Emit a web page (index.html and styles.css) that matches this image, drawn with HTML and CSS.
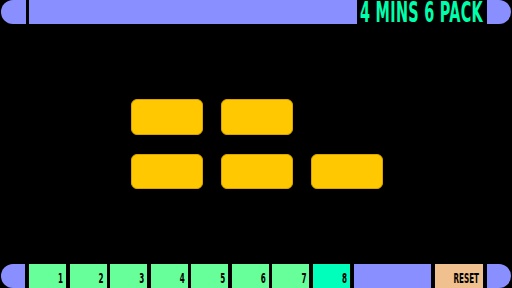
FILE: index.html
```html
<!DOCTYPE html>
<html>
<head>
<meta charset="utf-8">
<link rel="stylesheet" href="styles.css">
</head>
<body>
<div class="screen">
  <header class="topbar">
    <div class="cap cap-left"></div>
    <div class="bar"></div>
    <div class="title"><span class="title-text">4 MINS 6 PACK</span></div>
    <div class="cap cap-right"></div>
  </header>
  <main class="stage">
    <div class="pack">
      <div class="can"></div>
      <div class="can"></div>
      <div class="can empty"></div>
      <div class="can"></div>
      <div class="can"></div>
      <div class="can"></div>
    </div>
  </main>
  <footer class="bottombar">
    <div class="cap cap-left"></div>
    <div class="buttons">
      <div class="btn"><span class="label">1</span></div>
      <div class="btn"><span class="label">2</span></div>
      <div class="btn"><span class="label">3</span></div>
      <div class="btn"><span class="label">4</span></div>
      <div class="btn"><span class="label">5</span></div>
      <div class="btn"><span class="label">6</span></div>
      <div class="btn"><span class="label">7</span></div>
      <div class="btn active"><span class="label">8</span></div>
    </div>
    <div class="filler"></div>
    <div class="btn reset"><span class="label">RESET</span></div>
    <div class="cap cap-right"></div>
  </footer>
</div>
</body>
</html>
```

FILE: styles.css
```css
html, body {
  margin: 0;
  padding: 0;
  background: #000;
}
.screen {
  width: 512px;
  height: 288px;
  display: flex;
  flex-direction: column;
  background: #000;
  font-family: "DejaVu Sans Condensed", "DejaVu Sans", sans-serif;
}
.topbar, .bottombar {
  height: 24px;
  display: flex;
  align-items: stretch;
  padding: 0 1px 0 1px;
}
.cap {
  width: 25px;
  background: #8a8fff;
  flex: none;
}
.cap-left {
  border-radius: 12px 0 0 12px;
}
.cap-right {
  width: 24px;
  border-radius: 0 12px 12px 0;
}
.topbar .bar {
  flex: 1;
  background: #8a8fff;
  margin-left: 3px;
}
.title {
  flex: none;
  margin: 0 4px 0 3px;
  display: flex;
  align-items: flex-end;
}
.title-text {
  display: inline-block;
  color: #00ffaa;
  font-weight: bold;
  font-size: 16px;
  line-height: 12px;
  white-space: nowrap;
  letter-spacing: 0.3px;
  transform: scaleY(1.8);
  transform-origin: 50% 100%;
  margin-bottom: 0;
}
.stage {
  flex: 1;
  display: flex;
  align-items: center;
  justify-content: center;
}
.pack {
  display: grid;
  grid-template-columns: repeat(3, 72px);
  grid-template-rows: repeat(2, 35.5px);
  column-gap: 18px;
  row-gap: 19px;
  margin-left: 1px;
}
.can {
  background: #ffc800;
  border: 1px solid #d9a300;
  border-radius: 6px;
}
.can.empty {
  visibility: hidden;
}
.bottombar .cap-left {
  width: 24px;
}
.buttons {
  display: flex;
  gap: 3.5px;
  width: 321px;
  margin-left: 4px;
}
.btn {
  flex: 1;
  background: #66ff99;
  display: flex;
  align-items: flex-end;
  justify-content: flex-end;
  padding: 0 3px 3px 0;
}
.btn.active {
  background: #00ffbb;
}
.filler {
  width: 77px;
  background: #8a8fff;
  margin: 0 4px;
}
.btn.reset {
  flex: none;
  width: 48px;
  box-sizing: border-box;
  background: #f0c08e;
  margin-right: 4px;
  padding-right: 4px;
}
.label {
  display: inline-block;
  color: #000;
  font-weight: bold;
  font-size: 8px;
  line-height: 7px;
  transform: scaleY(1.7);
  transform-origin: 100% 100%;
}
```
